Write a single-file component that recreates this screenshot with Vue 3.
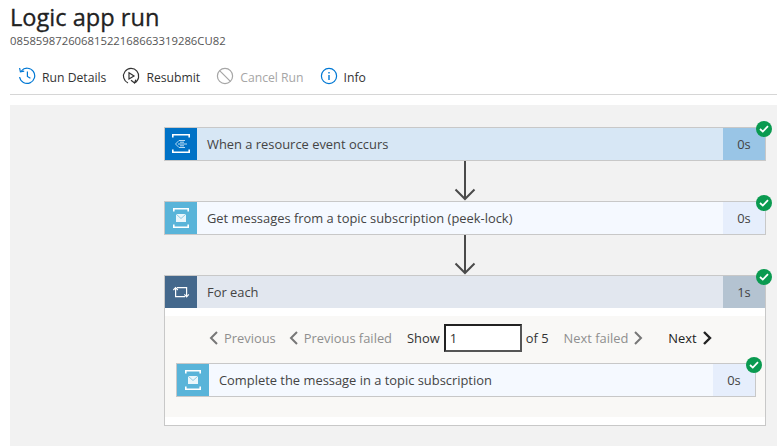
<script setup>
const toolbar = [
  { label: 'Run Details', icon: 'history' },
  { label: 'Resubmit', icon: 'resubmit' },
  { label: 'Cancel Run', icon: 'cancel', disabled: true },
  { label: 'Info', icon: 'info' }
]
</script>

<template>
  <div class="page">
    <header class="head">
      <h1>Logic app run</h1>
      <div class="run-id">08585987260681522168663319286CU82</div>
    </header>

    <nav class="toolbar">
      <div v-for="item in toolbar" :key="item.label" class="tool" :class="{ disabled: item.disabled }">
        <svg v-if="item.icon === 'history'" width="18" height="18" viewBox="0 0 18 18" fill="none" stroke="#0078d4" stroke-width="1.2">
          <path d="M3.4 3.8A7.6 7.6 0 1 1 1.6 10" />
          <path d="M1.6 1 2.4 4.8 6.2 4.2" />
          <path d="M9.4 4.6V9.4L12.4 11.2" />
        </svg>
        <svg v-else-if="item.icon === 'resubmit'" width="18" height="18" viewBox="0 0 18 18" fill="none" stroke="#333" stroke-width="1.2">
          <path d="M6 16A7.6 7.6 0 1 1 12.6 15.8" />
          <path d="M9 13.2 12.6 16 13.8 12.6" />
          <path d="M7 5.8 12 9 7 12Z" />
        </svg>
        <svg v-else-if="item.icon === 'cancel'" width="18" height="18" viewBox="0 0 18 18" fill="none" stroke="#a6a6a6" stroke-width="1.2">
          <circle cx="9" cy="9" r="7.6" />
          <path d="M3.6 3.6 14.4 14.4" />
        </svg>
        <svg v-else width="18" height="18" viewBox="0 0 18 18" fill="none" stroke="#0078d4" stroke-width="1.2">
          <circle cx="9" cy="9" r="7.6" />
          <path d="M9 8V13" stroke-width="1.4" />
          <path d="M9 5V6.4" stroke-width="1.4" />
        </svg>
        <span>{{ item.label }}</span>
      </div>
    </nav>

    <main class="canvas">
      <section class="card trigger">
        <div class="card-row">
          <div class="card-icon">
            <svg width="32" height="32" viewBox="0 0 32 32" fill="none" stroke="#fff" stroke-width="1.6">
              <path d="M7.8 9.5V6.8H24.2V9.5M7.8 21.5V24.2H24.2V21.5" />
              <path d="M10.5 16 14 12.5H20M10.5 16 14 19.5H20M13 16H22M15 14.2H19M15 17.8H19" stroke="#b9dcf3" stroke-width="1" />
            </svg>
          </div>
          <div class="card-title">When a resource event occurs</div>
          <div class="card-time">0s</div>
        </div>
        <span class="ok"><svg width="10" height="8" viewBox="0 0 10 8" fill="none" stroke="#fff" stroke-width="1.8"><path d="M1 4 3.8 6.6 9 1.2" /></svg></span>
      </section>

      <svg class="arrow" width="22" height="40" viewBox="0 0 22 40" fill="none" stroke="#4a4a4a" stroke-width="2">
        <path d="M11 0V38M1.5 28.5 11 38 20.5 28.5" />
      </svg>

      <section class="card bus">
        <div class="card-row">
          <div class="card-icon">
            <svg width="32" height="32" viewBox="0 0 32 32" fill="none">
              <path d="M8.8 9.5V6.8H23.2V9.5M8.8 22.5V25.2H23.2V22.5" stroke="#fff" stroke-width="1.6" />
              <rect x="11" y="12" width="10" height="8" fill="#eaf6fb" />
              <path d="M11 12 16 16.5 21 12" stroke="#8ccbe3" stroke-width="1" />
            </svg>
          </div>
          <div class="card-title">Get messages from a topic subscription (peek-lock)</div>
          <div class="card-time">0s</div>
        </div>
        <span class="ok"><svg width="10" height="8" viewBox="0 0 10 8" fill="none" stroke="#fff" stroke-width="1.8"><path d="M1 4 3.8 6.6 9 1.2" /></svg></span>
      </section>

      <svg class="arrow" width="22" height="40" viewBox="0 0 22 40" fill="none" stroke="#4a4a4a" stroke-width="2">
        <path d="M11 0V38M1.5 28.5 11 38 20.5 28.5" />
      </svg>

      <section class="card loop">
        <div class="card-row loop-head">
          <div class="card-icon">
            <svg width="32" height="32" viewBox="0 0 32 32" fill="none" stroke="#fff" stroke-width="1.2">
              <path d="M10.6 12V20.6H20M21.6 20V11.6H12" />
              <path d="M8.4 14 10.6 11.6 12.8 14M19.4 18.4 21.6 20.8 23.8 18.4" />
            </svg>
          </div>
          <div class="card-title">For each</div>
          <div class="card-time">1s</div>
        </div>
        <span class="ok"><svg width="10" height="8" viewBox="0 0 10 8" fill="none" stroke="#fff" stroke-width="1.8"><path d="M1 4 3.8 6.6 9 1.2" /></svg></span>

        <div class="loop-body">
          <div class="pager">
            <span class="page-link muted">
              <svg width="9" height="14" viewBox="0 0 9 14" fill="none" stroke="currentColor" stroke-width="2"><path d="M8 1 2 7 8 13" /></svg>
              Previous
            </span>
            <span class="page-link muted prev-failed">
              <svg width="9" height="14" viewBox="0 0 9 14" fill="none" stroke="currentColor" stroke-width="2"><path d="M8 1 2 7 8 13" /></svg>
              Previous failed
            </span>
            <span class="show">Show</span>
            <input class="page-input" value="1" />
            <span class="of">of 5</span>
            <span class="page-link muted next-failed">
              Next failed
              <svg width="9" height="14" viewBox="0 0 9 14" fill="none" stroke="currentColor" stroke-width="2"><path d="M1 1 7 7 1 13" /></svg>
            </span>
            <span class="page-link next">
              Next
              <svg width="9" height="14" viewBox="0 0 9 14" fill="none" stroke="currentColor" stroke-width="2.4"><path d="M1 1 7 7 1 13" /></svg>
            </span>
          </div>

          <section class="card bus nested">
            <div class="card-row">
              <div class="card-icon">
                <svg width="32" height="32" viewBox="0 0 32 32" fill="none">
                  <path d="M8.8 9.5V6.8H23.2V9.5M8.8 22.5V25.2H23.2V22.5" stroke="#fff" stroke-width="1.6" />
                  <rect x="11" y="12" width="10" height="8" fill="#eaf6fb" />
                  <path d="M11 12 16 16.5 21 12" stroke="#8ccbe3" stroke-width="1" />
                </svg>
              </div>
              <div class="card-title">Complete the message in a topic subscription</div>
              <div class="card-time">0s</div>
            </div>
            <span class="ok"><svg width="10" height="8" viewBox="0 0 10 8" fill="none" stroke="#fff" stroke-width="1.8"><path d="M1 4 3.8 6.6 9 1.2" /></svg></span>
          </section>
        </div>
      </section>
    </main>
  </div>
</template>

<style>
html,
body {
  margin: 0;
  background: #fff;
  overflow: hidden;
}
</style>

<style scoped>
.page {
  width: 777px;
  height: 446px;
  overflow: hidden;
  font-family: "Open Sans", "Noto Sans", sans-serif;
  color: #333;
  box-sizing: border-box;
  padding-left: 10px;
}
.head {
  height: 53px;
  padding-top: 3px;
  box-sizing: border-box;
}
h1 {
  margin: 0;
  font-size: 23.6px;
  line-height: 28px;
  font-weight: 400;
  color: #222;
  -webkit-text-stroke: 0.3px #222;
}
.run-id {
  font-size: 11.3px;
  line-height: 14px;
  margin-top: 3px;
  color: #555;
}
.toolbar {
  height: 42px;
  padding: 5px 0 0 8px;
  box-sizing: border-box;
  display: flex;
  align-items: center;
  gap: 16px;
  border-bottom: 1px solid #d6d6d6;
}
.tool {
  display: flex;
  align-items: center;
  gap: 6px;
  font-size: 12.2px;
}
.tool span {
  padding-top: 2px;
}
.tool.disabled {
  color: #a6a6a6;
}
.canvas {
  margin-top: 10px;
  height: 341px;
  background: #f2f2f2;
  padding: 22px 11px 0 154px;
  box-sizing: border-box;
}
.card {
  position: relative;
  border: 1px solid #c8c8c8;
  box-sizing: border-box;
}
.card-row {
  display: flex;
  height: 32px;
  align-items: stretch;
}
.card-icon {
  width: 32px;
  display: flex;
  align-items: center;
  justify-content: center;
  flex: none;
}
.card-title {
  flex: 1;
  padding-left: 10px;
  font-size: 12.9px;
  line-height: 32px;
  color: #444;
}
.card-time {
  width: 42px;
  text-align: center;
  font-size: 12.9px;
  line-height: 32px;
  color: #444;
  flex: none;
}
.ok {
  position: absolute;
  top: -7px;
  right: -7px;
  width: 16px;
  height: 16px;
  border-radius: 50%;
  background: #0a9a50;
  display: flex;
  align-items: center;
  justify-content: center;
}
.trigger .card-icon {
  background: #0072c6;
}
.trigger .card-title {
  background: #d7e7f5;
}
.trigger .card-time {
  background: #99c5e6;
}
.bus .card-icon {
  background: #59b4d9;
}
.bus .card-title {
  background: #f5f9ff;
}
.bus .card-time {
  background: #e6eefc;
}
.arrow {
  display: block;
  margin-left: 290px;
}
.loop {
  background: #fff;
  height: 151px;
}
.loop-head .card-icon {
  background: #44688c;
}
.loop-head .card-title {
  background: #e2e7ef;
}
.loop-head .card-time {
  background: #b4c3d1;
}
.loop-body {
  margin-top: 8px;
  height: 101px;
  background: #f9f8f6;
  padding: 0 9px 0 11px;
  box-sizing: border-box;
}
.pager {
  height: 44px;
  margin-bottom: 3px;
  display: flex;
  align-items: center;
  font-size: 12.9px;
  color: #333;
  padding-left: 33px;
}
.page-link {
  display: inline-flex;
  align-items: center;
  gap: 6px;
}
.muted {
  color: #8f8f8f;
}
.muted svg {
  color: #777;
}
.prev-failed {
  margin-left: 13px;
}
.show {
  margin-left: 15px;
}
.page-input {
  width: 78px;
  height: 28px;
  margin-left: 4px;
  border: 2px solid #222;
  border-right-color: #555;
  border-bottom-color: #555;
  padding: 0 0 0 4px;
  box-sizing: border-box;
  background: #fff;
  font: inherit;
  color: #333;
  outline: none;
}
.of {
  margin-left: 4px;
}
.next-failed {
  margin-left: 15px;
}
.next {
  margin-left: 25px;
  color: #222;
}
</style>
